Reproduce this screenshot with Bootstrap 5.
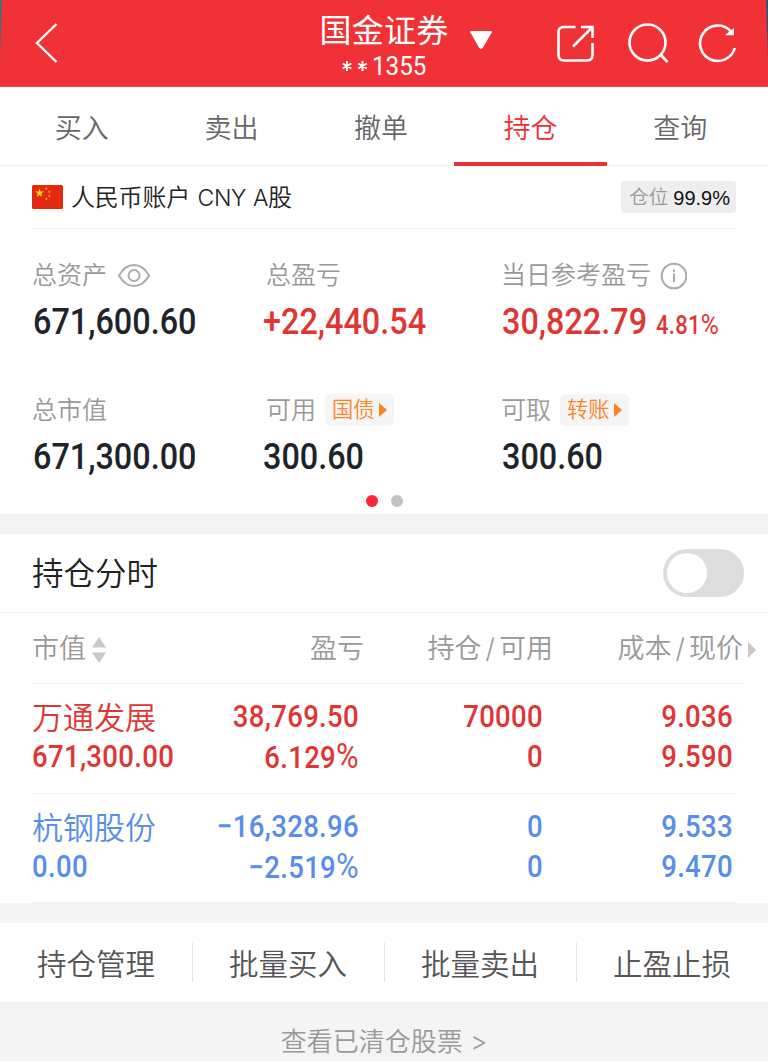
<!DOCTYPE html>
<html lang="zh-CN">
<head>
<meta charset="utf-8">
<meta name="viewport" content="width=device-width, initial-scale=1">
<title>持仓</title>
<link href="https://cdn.jsdelivr.net/npm/bootstrap@5.3.0/dist/css/bootstrap.min.css" rel="stylesheet">
<style>
body{font-family:Inter,"Noto Sans CJK SC",sans-serif;font-weight:350;color:#222;background:#fff;width:768px;height:1062px;overflow:hidden}
svg{display:block;flex:none}
.app-head{height:87px;background:linear-gradient(#f03136 86px,#ee4448 86px);color:#fff;position:relative}
.edge-l,.edge-r{position:absolute;top:0;left:0}
.edge-r{left:auto;right:0}
.title-box{margin-left:318px;width:132px}
.broker{font-size:32px;line-height:40px;font-weight:400;margin-top:11px;letter-spacing:.3px}
.acct-no{font-size:26px;line-height:30px;font-family:Roboto,sans-serif;font-weight:400;display:flex;align-items:center;justify-content:center}
.acct-no span{transform:scaleX(.93);transform-origin:0 50%;margin-right:-4px}
.acct-no svg{margin-right:4px}
.tabs{height:79px;padding:0 13px 0 7px;border-bottom:1px solid #eee;font-size:27px;color:#666}
.tabs a{flex:1;text-align:center;line-height:84px;height:79px;color:inherit;text-decoration:none;position:relative}
.tabs a.on{color:#ee2f33}
.tabs a.on::after{content:"";position:absolute;left:-2px;right:-2px;bottom:0;height:4px;background:#ee2f33}
.account{height:63px;margin:0 32px;border-bottom:1px solid #f1f1f1;font-size:24px}
.account .name{position:relative;top:1px;letter-spacing:-.2px;word-spacing:1px}
.account .latin{font-size:23px;letter-spacing:-.4px}
.pos-chip{height:32px;background:#eeeef0;border-radius:3px;font-size:19.5px;color:#999;padding:2px 6px 0 8px;gap:5px}
.pos-chip b{font-weight:400;color:#111;font:400 20px "Liberation Sans",sans-serif}
.assets{height:285px;display:grid;grid-template-columns:230px 239px 1fr;grid-template-rows:135px 120px;padding:26px 0 0 32px}
.lbl{height:40px;font-size:25px;color:#999;display:flex;align-items:center;padding-top:2px}
.lbl svg{margin-top:-1px}
.c2 .lbl{padding-left:4px}
.num{display:block;font-family:Roboto,sans-serif;font-weight:500;transform:scaleX(.88);transform-origin:0 50%;white-space:nowrap;letter-spacing:.35px}
.big{font-size:36.8px;line-height:50px;margin-top:2px;margin-left:1px;color:#20242a;letter-spacing:0}
.pct{font-size:25px;margin-left:1px;letter-spacing:.3px}
.pc{font-size:1.12em;font-weight:400}
.red{color:#df3634}
.blue{color:#568eea}
.go{height:32px;background:#f5f5f5;border-radius:5px;color:#ff821f;font-size:21.3px;padding:0 7px;margin:-2px 0 0 9px;display:flex;align-items:center;gap:3px}
.dots{height:0;position:relative}
.dots i{position:absolute;width:12px;height:12px;border-radius:50%;top:-19.5px;left:365.5px;background:#ff2438}
.dots i+i{left:391px;background:#c2c2c2}
.band{height:20px;background:#f4f4f4}
.section{height:79px;border-bottom:1px solid #f2f2f2;padding:0 24px 0 32px;font-size:31.5px}
.section>span:first-child{position:relative;top:1px}
.toggle{width:81px;height:48px;border-radius:24px;background:#ddd;padding:4px}
.toggle i{display:block;width:40px;height:40px;border-radius:50%;background:#fff}
.cols{height:71px;margin:0 24px 0 32px;border-bottom:1px solid #f2f2f2;display:grid;grid-template-columns:132px 200px 189px 190px;align-items:center;font-size:27px;color:#999;padding-top:3px}
.cols .sl{margin:0 4px}
.hold{margin:0 32px;display:grid;grid-template-columns:140px 187px 184px 190px 3px;height:110px;border-bottom:1px solid #f2f2f2;padding-top:13px}
.hold .num{font-size:31.3px;line-height:39.5px}
.hold .r{text-align:right}
.hold .r .num{transform-origin:100% 50%}
.hold .stock{font-size:31px;line-height:40px;height:39.5px;padding-top:1px}
.actions{height:79px;color:#555;font-size:29.5px}
.actions a{width:192px;line-height:82px;height:79px;text-align:center;color:inherit;text-decoration:none;position:relative}
.actions a+a::before{content:"";position:absolute;left:0;top:20px;height:39px;width:1px;background:#e2e2e2}
.foot{height:59px;background:#f4f4f4;color:#999;font-size:26px;line-height:80px;text-align:center;overflow:hidden}
</style>
</head>
<body>
<header class="app-head d-flex">
  <svg class="edge-l" width="2" height="60"><path d="M0 0H2L0 60Z" fill="#4a6a82"/></svg>
  <svg class="edge-r" width="3" height="60"><path d="M1 0H3V60Z" fill="#33527a"/></svg>
  <svg class="position-absolute" width="768" height="87" fill="none" stroke="#fff" stroke-width="2.4">
    <path d="M56.500 24 37 43 56.500 62"/>
    <path d="M471 31h20q1.500 0 .8 1.300L483 47.500q-2 2.800-4 0L470.200 32.300Q469.500 31 471 31Z" fill="#fff" stroke="none"/>
    <g stroke-width="2.600"><path d="M575.500 27H564q-5.500 0-5.500 5.500v22q0 6 5.500 6h23q5.500 0 5.500-6V43M581 27H592.500V38M592 27.500 573 46.500"/>
    <circle cx="647.500" cy="42.500" r="18"/><path d="M660.500 54.500 667.500 62"/>
    <path d="M734.800 48A17.700 17.700 0 1 1 730.500 31"/></g>
    <path d="M733.200 29.500V34.500H727Z" fill="#fff" stroke-width="1.500"/>
  </svg>
  <div class="title-box text-center"><div class="broker text-nowrap">国金证券</div><div class="acct-no"><svg width="26" height="12" stroke="#fff" stroke-width="2"><path d="M5 1V11M.7 3.500 9.300 8.500M.7 8.500 9.300 3.500M20.500 1V11M16.200 3.500 24.800 8.500M16.200 8.500 24.800 3.500"/></svg><span>1355</span></div></div>
</header>
<nav class="tabs d-flex"><a>买入</a><a>卖出</a><a>撤单</a><a class="on">持仓</a><a>查询</a></nav>
<div class="account d-flex align-items-center justify-content-between">
  <div class="d-flex align-items-center">
    <svg width="31" height="24" class="me-2"><rect width="31" height="24" rx="1.500" fill="#e42913"/><path d="M7.500 3.500 8.500 6.600H11.800L9.200 8.600 10.200 11.800 7.500 9.900 4.800 11.800 5.800 8.600 3.200 6.600H6.500Z" fill="#ffde00"/><g fill="#f2a000"><circle cx="14.300" cy="3.700" r="1.100"/><circle cx="17.300" cy="6.800" r="1.100"/><circle cx="17.300" cy="11" r="1.100"/><circle cx="14.300" cy="13.900" r="1.100"/></g></svg>
    <span class="name">人民币账户 <span class="latin">CNY A</span>股</span>
  </div>
  <div class="pos-chip d-flex align-items-center"><span>仓位</span><b>99.9%</b></div>
</div>
<main class="assets">
  <div><div class="lbl">总资产<svg class="ms-2" width="36" height="26" viewBox="-2 0 36 26" fill="none" stroke="#aaa" stroke-width="2"><path d="M2 12.500C10-1.500 24-1.500 32 12.500C24 26.500 10 26.500 2 12.500Z"/><circle cx="17" cy="12.500" r="5.500"/></svg></div><div class="num big">671,600.60</div></div>
  <div class="c2"><div class="lbl">总盈亏</div><div class="num big red">+22,440.54</div></div>
  <div><div class="lbl">当日参考盈亏<svg class="ms-2" width="28" height="28" viewBox="-1 0 28 28" fill="none" stroke="#aaa" stroke-width="2"><circle cx="14" cy="14" r="12.300"/><path d="M14 11.500V20M14 7.500V9.800"/></svg></div><div class="num big red">30,822.79 <span class="pct">4.81<span class="pc">%</span></span></div></div>
  <div><div class="lbl">总市值</div><div class="num big">671,300.00</div></div>
  <div class="c2"><div class="lbl">可用<span class="go">国债<svg width="9" height="14"><path d="M1 0 9 7 1 14Z" fill="#ff821f"/></svg></span></div><div class="num big">300.60</div></div>
  <div><div class="lbl">可取<span class="go">转账<svg width="9" height="14"><path d="M1 0 9 7 1 14Z" fill="#ff821f"/></svg></span></div><div class="num big">300.60</div></div>
</main>
<div class="dots"><i></i><i></i></div>
<div class="band"></div>
<div class="section d-flex align-items-center justify-content-between"><span>持仓分时</span><span class="toggle"><i></i></span></div>
<div class="cols">
  <div class="d-flex align-items-center">市值<svg class="ms-1" viewBox="-1 0 16 26" width="16" height="26" fill="#c8c8c8"><path d="M8 0 15 10.500H1ZM8 26 15 15.500H1Z"/></svg></div>
  <div class="text-end">盈亏</div><div class="text-end">持仓<span class="sl">/</span>可用</div>
  <div class="text-end text-nowrap">成本<span class="sl">/</span>现价</div>
  <svg class="position-absolute" style="left:748px" width="8" height="16"><path d="M0 0 8 8 0 16Z" fill="#c8c8c8"/></svg>
</div>
<div class="hold red">
  <div><div class="stock">万通发展</div><span class="num">671,300.00</span></div>
  <div class="r"><span class="num">38,769.50</span><span class="num">6.129<span class="pc">%</span></span></div>
  <div class="r"><span class="num">70000</span><span class="num">0</span></div>
  <div class="r"><span class="num">9.036</span><span class="num">9.590</span></div>
</div>
<div class="hold blue" style="height:109px">
  <div><div class="stock">杭钢股份</div><span class="num">0.00</span></div>
  <div class="r"><span class="num">−16,328.96</span><span class="num">−2.519<span class="pc">%</span></span></div>
  <div class="r"><span class="num">0</span><span class="num">0</span></div>
  <div class="r"><span class="num">9.533</span><span class="num">9.470</span></div>
</div>
<div class="band"></div>
<div class="actions d-flex"><a>持仓管理</a><a>批量买入</a><a>批量卖出</a><a>止盈止损</a></div>
<footer class="foot">查看已清仓股票 &gt;</footer>
<script src="https://cdn.jsdelivr.net/npm/bootstrap@5.3.0/dist/js/bootstrap.bundle.min.js"></script>
</body>
</html>
